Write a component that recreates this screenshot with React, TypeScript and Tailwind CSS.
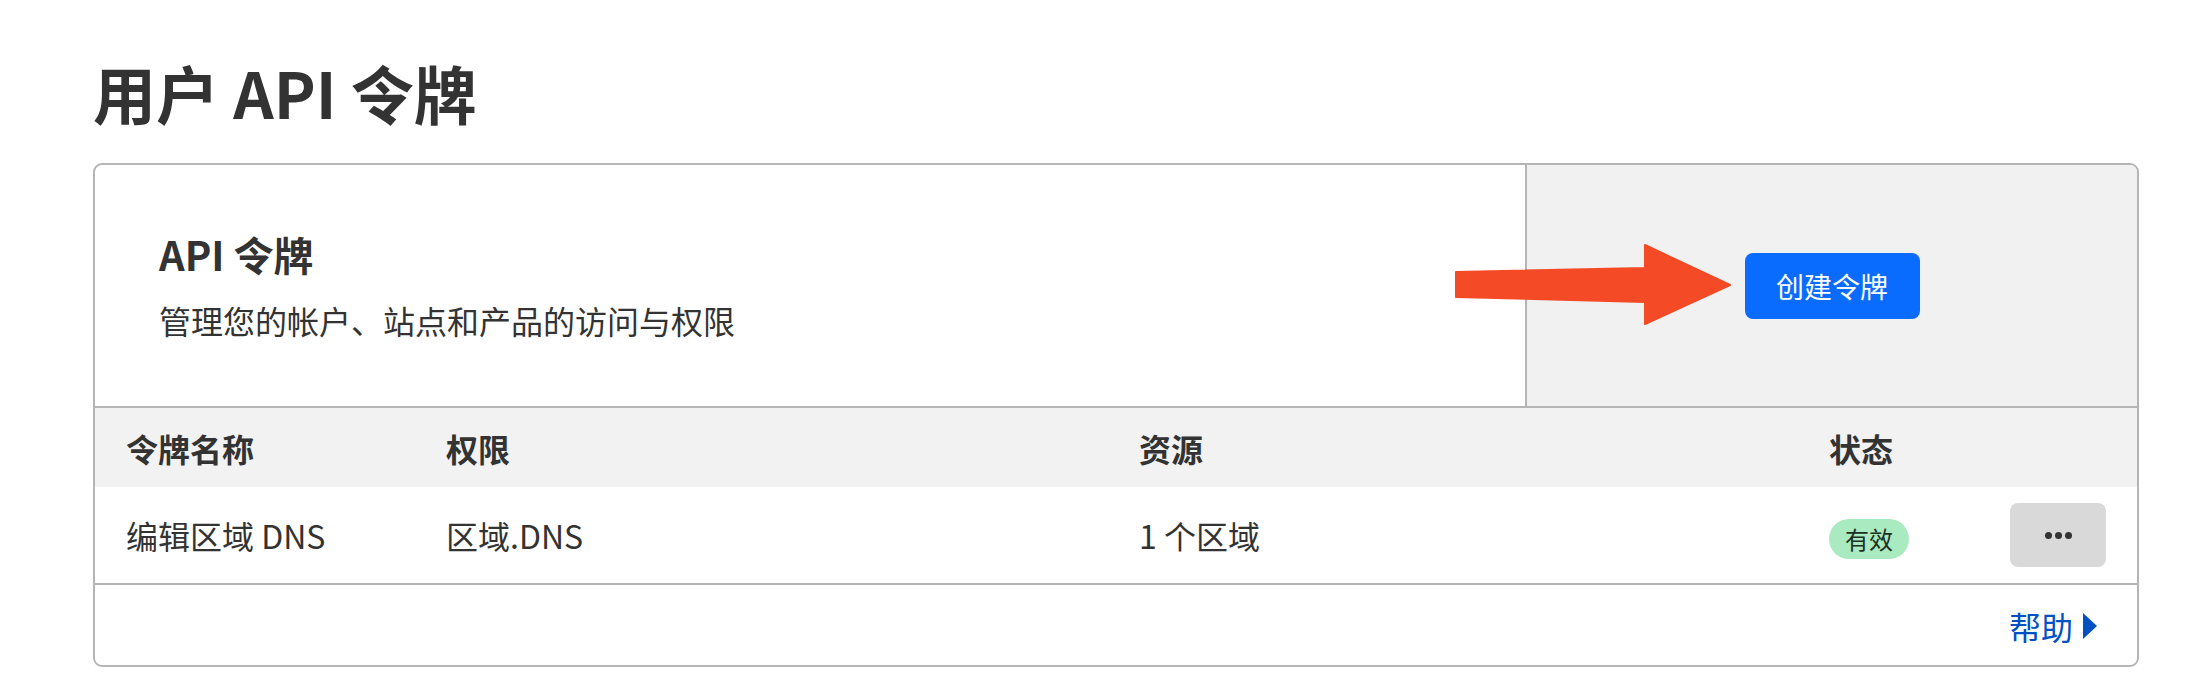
import React from 'react';

const font = { fontFamily: '"Noto Sans CJK SC", "Noto Sans", sans-serif' };

// Red annotation arrow pointing at the create button
function Arrow() {
  return (
    <svg
      className="absolute left-[1360px] top-[79px]"
      width="278"
      height="82"
      viewBox="-1 -1 278 82"
    >
      <path
        d="M0 27 L189 23 L189 0 L274 40 L189 79 L189 57 L0 52 Z"
        fill="#f44a25"
        stroke="#f44a25"
        strokeWidth={2}
        strokeLinejoin="round"
      />
    </svg>
  );
}

export default function App() {
  return (
    <div className="w-[2202px] h-[690px] bg-white pl-[93px] pt-[50px] text-[#313131]" style={font}>
      <h1 className="text-[63px] leading-[84px] font-semibold text-[#333333]">用户 API 令牌</h1>

      <div className="relative mt-[29px] w-[2046px] border-2 border-[#b5b5b5] rounded-[9px] overflow-hidden">
        {/* Top: title + create button */}
        <div className="flex h-[243px] border-b-2 border-[#b5b5b5]">
          <div className="w-[1430px] flex flex-col justify-center pl-[64px] pt-[2px]">
            <h2 className="text-[40px] leading-[48px] font-semibold text-[#333333]">API 令牌</h2>
            <p className="mt-[18px] text-[32px] leading-[48px] text-[#333333]">管理您的帐户、站点和产品的访问与权限</p>
          </div>
          <div className="flex-1 border-l-2 border-[#b5b5b5] bg-[#f1f1f1] flex items-center justify-center">
            <button className="w-[175px] h-[66px] rounded-[8px] bg-[#0a6cff] text-white text-[28px] leading-none">
              创建令牌
            </button>
          </div>
        </div>

        {/* Table header */}
        <div className="grid grid-cols-[320px_693px_690px_1fr_96px] items-center h-[79px] px-[31px] bg-[#f2f2f2] text-[32px] font-semibold text-[#333333]">
          <div>令牌名称</div>
          <div>权限</div>
          <div>资源</div>
          <div>状态</div>
          <div />
        </div>

        {/* Token row */}
        <div className="grid grid-cols-[320px_693px_690px_1fr_96px] items-center h-[98px] px-[31px] border-b-2 border-[#b5b5b5] text-[32px] text-[#333333]">
          <div>编辑区域 DNS</div>
          <div>区域.DNS</div>
          <div>1 个区域</div>
          <div>
            <span className="inline-flex items-center justify-center w-[80px] h-[40px] rounded-full bg-[#a9eac1] text-[24px] text-[#1c2f23]">
              有效
            </span>
          </div>
          <button className="w-[96px] h-[64px] rounded-[8px] bg-[#d9d9d9] flex items-center justify-center gap-[3px]">
            <span className="w-[7px] h-[7px] rounded-full bg-[#333333]" />
            <span className="w-[7px] h-[7px] rounded-full bg-[#333333]" />
            <span className="w-[7px] h-[7px] rounded-full bg-[#333333]" />
          </button>
        </div>

        {/* Footer */}
        <div className="h-[80px] flex items-center justify-end pr-[40px] pt-[2px]">
          <a className="flex items-center gap-[10px] text-[32px] text-[#0051c3]">
            帮助
            <svg width="14" height="26" viewBox="0 0 14 26">
              <path d="M0 0 L14 13 L0 26 Z" fill="#0051c3" />
            </svg>
          </a>
        </div>

        <Arrow />
      </div>
    </div>
  );
}
